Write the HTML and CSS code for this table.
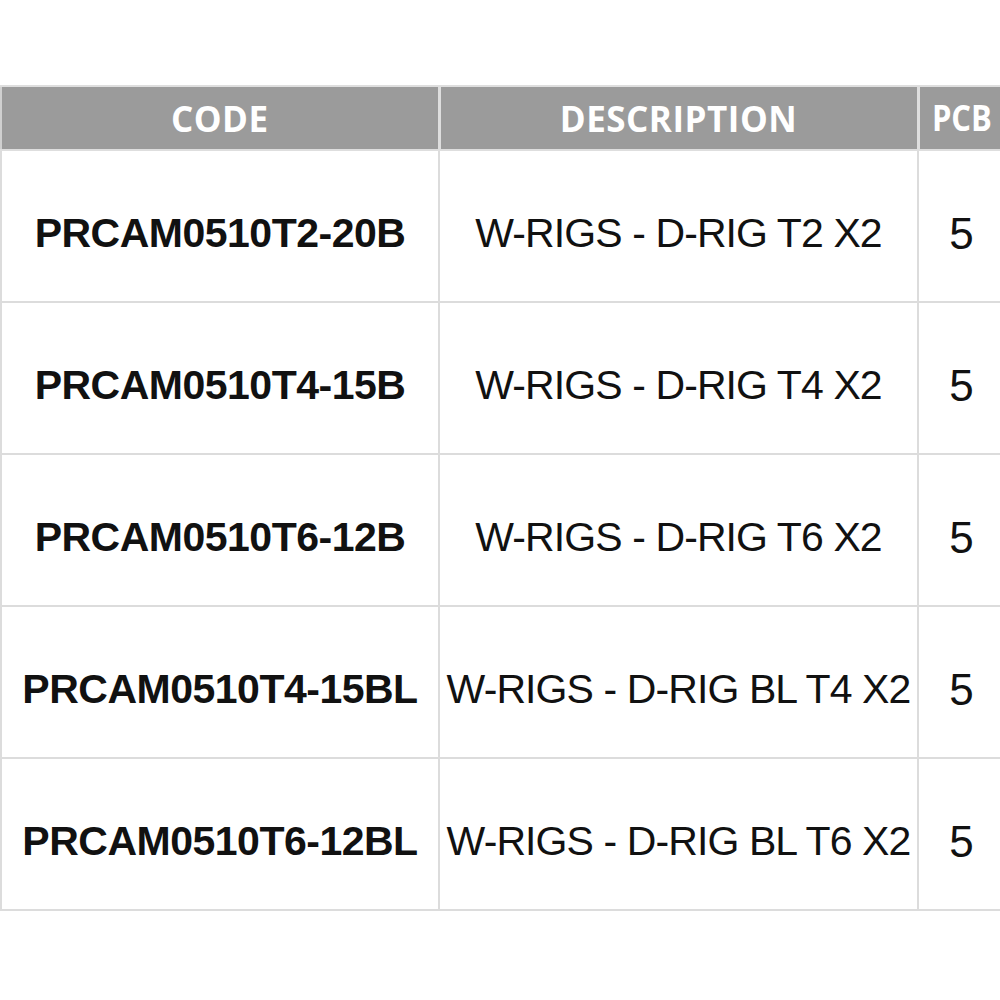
FILE: index.html
```html
<!DOCTYPE html>
<html lang="en">
<head>
<meta charset="utf-8">
<title>W-RIGS D-RIG</title>
<link rel="stylesheet" href="styles.css">
</head>
<body>
<div class="page">
  <table class="product-table">
    <colgroup>
      <col class="col-code">
      <col class="col-desc">
      <col class="col-pcb">
    </colgroup>
    <thead>
      <tr>
        <th>CODE</th>
        <th>DESCRIPTION</th>
        <th class="pcb-head"><span class="narrow">PCB</span></th>
      </tr>
    </thead>
    <tbody>
      <tr>
        <td class="code">PRCAM0510T2-20B</td>
        <td class="desc">W-RIGS - D-RIG T2 X2</td>
        <td class="pcb">5</td>
      </tr>
      <tr>
        <td class="code">PRCAM0510T4-15B</td>
        <td class="desc">W-RIGS - D-RIG T4 X2</td>
        <td class="pcb">5</td>
      </tr>
      <tr>
        <td class="code">PRCAM0510T6-12B</td>
        <td class="desc">W-RIGS - D-RIG T6 X2</td>
        <td class="pcb">5</td>
      </tr>
      <tr>
        <td class="code">PRCAM0510T4-15BL</td>
        <td class="desc">W-RIGS - D-RIG BL T4 X2</td>
        <td class="pcb">5</td>
      </tr>
      <tr>
        <td class="code">PRCAM0510T6-12BL</td>
        <td class="desc">W-RIGS - D-RIG BL T6 X2</td>
        <td class="pcb">5</td>
      </tr>
    </tbody>
  </table>
</div>
</body>
</html>
```
FILE: styles.css
```css
html, body {
  margin: 0;
  padding: 0;
  background: #ffffff;
}

.page {
  width: 1000px;
  height: 1000px;
  overflow: hidden;
  padding-top: 85px;
  box-sizing: border-box;
}

.product-table {
  border-collapse: collapse;
  table-layout: fixed;
  width: 1004px;
}

.col-code { width: 438px; }
.col-desc { width: 479px; }
.col-pcb { width: 87px; }

.product-table th {
  height: 64px;
  padding: 0;
  background: #9b9b9b;
  color: #ffffff;
  font-family: "Open Sans", "Noto Sans", sans-serif;
  font-weight: 700;
  font-size: 35px;
  letter-spacing: 0.5px;
  text-align: center;
  vertical-align: middle;
  border: 2px solid #dedede;
  border-left-width: 3px;
  border-right-width: 3px;
  box-sizing: border-box;
  line-height: 1;
}

.product-table th:first-child {
  border-left: 2px solid #d0d0d0;
}

.product-table th.pcb-head {
  letter-spacing: 0;
  font-size: 36px;
}

.narrow {
  display: inline-block;
  transform: scaleX(0.86);
}

.product-table td {
  height: 152px;
  padding: 15px 0 0 0;
  box-sizing: border-box;
  border: 2px solid #dcdcdc;
  text-align: center;
  vertical-align: middle;
  font-family: "Liberation Sans", Arial, sans-serif;
  color: #111111;
  white-space: nowrap;
  line-height: 1;
}

.product-table td.code {
  font-weight: 700;
  font-size: 41px;
  letter-spacing: -0.5px;
}

.product-table td.desc {
  font-weight: 400;
  font-size: 41px;
  letter-spacing: -0.9px;
}

.product-table td.pcb {
  font-weight: 400;
  font-size: 44px;
}
```
